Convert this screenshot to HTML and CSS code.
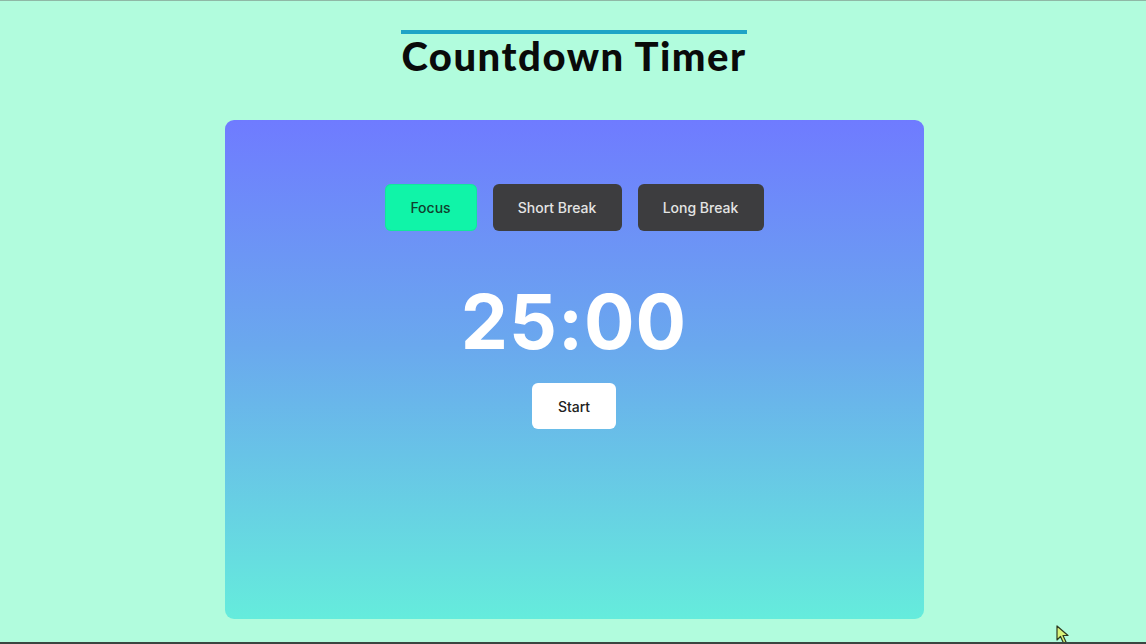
FILE: index.html
```html
<!DOCTYPE html>
<html lang="en">
<head>
<meta charset="utf-8">
<title>Countdown Timer</title>
<link rel="stylesheet" href="styles.css">
</head>
<body>
<div class="page">
  <header class="header">
    <h1 class="title">Countdown Timer</h1>
  </header>
  <main class="card">
    <div class="modes">
      <button class="mode mode-active">Focus</button>
      <button class="mode">Short Break</button>
      <button class="mode">Long Break</button>
    </div>
    <div class="time">25:00</div>
    <button class="start">Start</button>
  </main>
  <svg class="cursor" width="16" height="20" viewBox="0 0 16 20">
    <path d="M1 1 L1 15 L4.5 11.5 L7.5 18 L10 17 L7 10.5 L12 10.5 Z" fill="#d9f27a" stroke="#2e3a1e" stroke-width="1.2" stroke-linejoin="round"/>
  </svg>
</div>
</body>
</html>
```
FILE: styles.css
```css
* { box-sizing: border-box; }
html, body { margin: 0; padding: 0; }
body {
  background: #b1fcdd;
  font-family: "Lato", "Liberation Sans", sans-serif;
}
.page {
  position: relative;
  height: 644px;
  border-top: 1px solid #8fb8a6;
  border-bottom: 2px solid #3b4641;
  display: flex;
  flex-direction: column;
  align-items: center;
  overflow: hidden;
}
.header {
  padding-top: 29px;
  padding-left: 2px;
  display: flex;
  justify-content: center;
}
.title {
  margin: 0;
  border-top: 4px solid #1ea4c6;
  padding: 3px 0 0 0;
  font-family: "Lato", sans-serif;
  font-weight: 900;
  font-size: 40px;
  line-height: 38px;
  color: #0a0a0a;
  letter-spacing: 1.5px;
  width: 346px;
  text-align: center;
  white-space: nowrap;
}
.card {
  margin-top: 45px;
  margin-left: 2px;
  width: 699px;
  height: 499px;
  border-radius: 9px;
  background: linear-gradient(to bottom, #6f7bff 0%, #6aa8ee 45%, #65ecdc 100%);
  display: flex;
  flex-direction: column;
  align-items: center;
  padding-top: 64px;
}
.modes {
  display: flex;
  gap: 16px;
}
.mode {
  height: 47px;
  border: none;
  border-radius: 6px;
  background: #3d3d3f;
  color: #e4e4e4;
  font-family: "Inter", "Open Sans", sans-serif;
  font-size: 14px;
  font-weight: 500;
  padding: 0;
  white-space: nowrap;
  width: 129px;
}
.mode:first-child { width: 92px; }
.mode:last-child { width: 126px; }
.mode-active {
  background: #10f4a8;
  color: #10402e;
  box-shadow: 0 0 0 1px rgba(20,220,150,0.6) inset;
}
.time {
  margin-top: 50px;
  font-family: "Inter", "Open Sans", sans-serif;
  font-weight: 700;
  font-size: 75px;
  line-height: 82px;
  color: #ffffff;
  letter-spacing: 1px;
}
.start {
  margin-top: 20px;
  width: 84px;
  height: 46px;
  border: none;
  border-radius: 6px;
  background: #ffffff;
  color: #222;
  font-family: "Inter", "Open Sans", sans-serif;
  font-size: 14px;
  font-weight: 500;
}
.cursor {
  position: absolute;
  left: 1056px;
  top: 624px;
}
```
